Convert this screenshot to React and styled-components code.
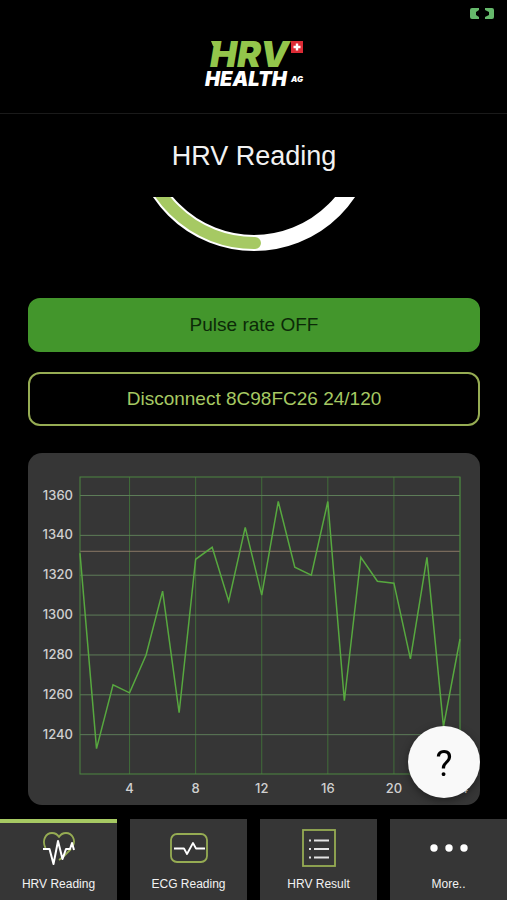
import React, { useState } from "react";
import styled, { createGlobalStyle, css } from "styled-components";

const colors = {
  background: '#000000',
  panel: '#363636',
  lime: '#a6c963',
  limeDark: '#96ac53',
  green: '#43962c',
  line: '#57a83f',
  text: '#f2f2f2',
}

const GlobalStyle = createGlobalStyle`
  * {
    box-sizing: border-box;
  }
  body {
    margin: 0;
    background: ${colors.background};
    color: ${colors.text};
    font-family: "Liberation Sans", Arial, sans-serif;
  }
  button {
    font-family: inherit;
  }
`

const intervals = [
  1331, 1233, 1265, 1261, 1280, 1312, 1251, 1328, 1334, 1307, 1344, 1310,
  1357, 1324, 1320, 1357, 1257, 1329, 1317, 1316, 1278, 1329, 1244, 1288,
]
const average = 1332
const yTicks = [1360, 1340, 1320, 1300, 1280, 1260, 1240]
const xTicks = [4, 8, 12, 16, 20, 24]

const plot = { left: 52, right: 432, top: 24, bottom: 321 }
const getX = n => plot.left + (n - 1) * (plot.right - plot.left) / 23
const getY = value => 42.5 + (1360 - value) * 1.993

const Logo = () => (
  <LogoImage viewBox="0 0 104 66" role="img" aria-label="HRV Health AG">
    <path d="M9 10h8l-2 6-4-1z" fill="#93c64b" />
    <LogoText x="8" y="36" fontSize="36" fill="#93c64b">HRV</LogoText>
    <rect x="89" y="10" width="12" height="12" fill="#dc2b35" />
    <path d="M95 12.500v7M91.500 16h7" stroke="#fff" strokeWidth="2.400" />
    <LogoText x="3" y="55" fontSize="20" fill="#fff">HEALTH</LogoText>
    <LogoText x="89" y="51" fontSize="8" fill="#fff">AG</LogoText>
  </LogoImage>
)

const StatusIcon = () => (
  <svg width="24" height="11" viewBox="0 0 24 11" fill="#66b96c" aria-hidden="true">
    <path d="M2 0h7v2L6 4v3l3 2v2H2Q0 11 0 9V2Q0 0 2 0z" />
    <path d="M15 0h7q2 0 2 2v7q0 2-2 2h-7V9l4-2V4l-4-2z" />
  </svg>
)

const Gauge = () => (
  <GaugeImage viewBox="0 0 240 54" fill="none" role="img" aria-label="Progress">
    <circle cx="120" cy="-67.500" r="113.500" stroke="#fff" strokeWidth="16" />
    <path d="M6.500 -67.500A113.500 113.500 0 0 0 121 46" stroke={colors.lime} strokeWidth="12" strokeLinecap="round" />
  </GaugeImage>
)

const Chart = () => (
  <ChartImage viewBox="0 0 452 352" role="img" aria-label="Heart rate intervals">
    {xTicks.map(n => (
      <g key={`x-${n}`}>
        <path d={`M${getX(n)} ${plot.top}V${plot.bottom}`} stroke="#416d3a" />
        <AxisLabel x={getX(n)} y="340" textAnchor="middle">{n}</AxisLabel>
      </g>
    ))}
    {yTicks.map(value => (
      <g key={`y-${value}`}>
        <path d={`M${plot.left} ${getY(value)}H${plot.right}`} stroke="#5d7c58" />
        <AxisLabel x="45" y={getY(value) + 4} textAnchor="end">{value}</AxisLabel>
      </g>
    ))}
    <path d={`M${plot.left} ${getY(average)}H${plot.right}`} stroke="#8a7866" />
    <rect
      x={plot.left}
      y={plot.top}
      width={plot.right - plot.left}
      height={plot.bottom - plot.top}
      fill="none"
      stroke="#4c8641"
    />
    <polyline
      points={intervals.map((value, i) => `${getX(i + 1)},${getY(value)}`).join(' ')}
      fill="none"
      stroke={colors.line}
      strokeWidth="1.500"
    />
  </ChartImage>
)

const HeartIcon = () => (
  <svg width="34" height="34" viewBox="0 0 34 34" fill="none" strokeLinejoin="round">
    <path d="M3.500 17C-.5 9 4 2 10 2c3 0 5.500 1.500 7 4C18.500 3.500 21 2 24 2c6 0 10.500 7 6.500 14M29 18l-8 8-4 3" stroke={colors.limeDark} strokeWidth="1.800" />
    <path d="M1 18h6.500l4 15 4.500-23 4.500 18L24 18h4l2-6 2 7" stroke="#fff" strokeWidth="2" />
  </svg>
)

const EcgIcon = () => (
  <svg width="38" height="30" viewBox="0 0 38 30" fill="none" strokeLinejoin="round">
    <rect x="1" y="1" width="36" height="28" rx="6" stroke={colors.limeDark} strokeWidth="1.800" />
    <path d="M4 15.500h10l3 5.500 6-11 3 5.500H35" stroke="#fff" strokeWidth="1.800" />
  </svg>
)

const ResultIcon = () => (
  <svg width="34" height="38" viewBox="0 0 34 38" fill="none">
    <rect x="1" y="1" width="32" height="36" stroke={colors.limeDark} strokeWidth="1.800" />
    <path d="M12 11.500h15M12 20h15M12 28.500h15M7 11.500h2M7 20h2M7 28.500h2" stroke="#e4e4e4" strokeWidth="1.800" />
  </svg>
)

const MoreIcon = () => (
  <svg width="38" height="8" viewBox="0 0 38 8" fill="#fff">
    <circle cx="4" cy="4" r="3.700" />
    <circle cx="19" cy="4" r="3.700" />
    <circle cx="34" cy="4" r="3.700" />
  </svg>
)

const tabs = [
  { name: 'HRV Reading', Icon: HeartIcon },
  { name: 'ECG Reading', Icon: EcgIcon },
  { name: 'HRV Result', Icon: ResultIcon },
  { name: 'More..', Icon: MoreIcon },
]

const App = () => {
  const [activeTab, setActiveTab] = useState('HRV Reading')

  return (
    <Page>
      <GlobalStyle />
      <Header>
        <Status><StatusIcon /></Status>
        <Logo />
      </Header>
      <Content>
        <Title>HRV Reading</Title>
        <Gauge />
        <Actions>
          <ActionButton type="button" $filled>Pulse rate OFF</ActionButton>
          <ActionButton type="button">Disconnect 8C98FC26 24/120</ActionButton>
        </Actions>
        <ChartCard>
          <Chart />
        </ChartCard>
      </Content>
      <TabBar>
        {tabs.map(({ name, Icon }) => (
          <Tab key={name} type="button" $active={name === activeTab} onClick={() => setActiveTab(name)}>
            <TabIcon><Icon /></TabIcon>
            {name}
          </Tab>
        ))}
      </TabBar>
      <HelpButton type="button" aria-label="Help">?</HelpButton>
    </Page>
  )
}

const Page = styled.div`
  display: flex;
  flex-direction: column;
  min-height: 100vh;
`

const Header = styled.header`
  position: relative;
  display: flex;
  justify-content: center;
  padding: 31px 0 16px;
  border-bottom: 1px solid #1a1a1a;
`

const Status = styled.div`
  position: absolute;
  top: 8px;
  right: 13px;
  display: flex;
`

const LogoImage = styled.svg`
  width: 104px;
  height: 66px;
  overflow: visible;
`

const LogoText = styled.text`
  font-family: Inter, sans-serif;
  font-weight: 900;
  font-style: italic;
`

const Content = styled.main`
  flex-grow: 1;
  display: flex;
  flex-direction: column;
  align-items: center;
  padding: 26px 27px 14px 28px;
`

const Title = styled.h1`
  margin: 0 0 25px;
  font-size: 27px;
  line-height: 32px;
  font-weight: 400;
`

const GaugeImage = styled.svg`
  width: 240px;
  height: 54px;
`

const Actions = styled.div`
  width: 100%;
  display: flex;
  flex-direction: column;
  gap: 20px;
  margin: 47px 0 27px;
`

const ActionButton = styled.button`
  height: 54px;
  border: 2px solid ${colors.limeDark};
  border-radius: 12px;
  background: transparent;
  color: ${colors.lime};
  font-size: 19px;
  cursor: pointer;
  ${props => props.$filled && css`
    border-color: ${colors.green};
    background: ${colors.green};
    color: #0c2a08;
  `}
`

const ChartCard = styled.section`
  width: 100%;
  border-radius: 14px;
  background: ${colors.panel};
`

const ChartImage = styled.svg`
  display: block;
  width: 100%;
`

const AxisLabel = styled.text`
  font-family: Inter, sans-serif;
  font-size: 13px;
  font-weight: 500;
  fill: #d0d0d0;
`

const TabBar = styled.nav`
  position: sticky;
  bottom: 0;
  display: grid;
  grid-template-columns: repeat(4, 1fr);
  gap: 13px;
  background: ${colors.background};
`

const Tab = styled.button`
  display: flex;
  flex-direction: column;
  align-items: center;
  height: 81px;
  padding: 6px 0 0;
  border: 0;
  border-top: 4px solid ${props => props.$active ? colors.lime : colors.panel};
  background: ${colors.panel};
  color: ${colors.text};
  font-size: 12px;
  line-height: 16px;
  cursor: pointer;
`

const TabIcon = styled.span`
  display: flex;
  align-items: center;
  justify-content: center;
  height: 38px;
  margin-bottom: 9px;
`

const HelpButton = styled.button`
  position: fixed;
  right: 27px;
  bottom: 102px;
  width: 72px;
  height: 72px;
  padding: 4px 0 0;
  border: 0;
  border-radius: 50%;
  background: #f9f9f9;
  box-shadow: 0 3px 8px rgba(0,0,0,0.4);
  color: #000;
  font-family: Roboto, sans-serif;
  font-size: 36px;
  cursor: pointer;
`

export default App
